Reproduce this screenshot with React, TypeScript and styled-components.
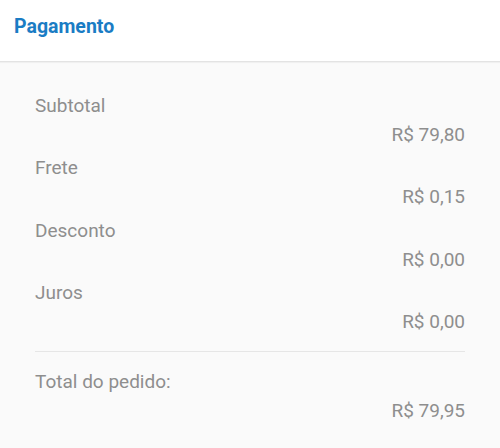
import React from "react";
import styled, { createGlobalStyle } from "styled-components";

const Global = createGlobalStyle`
  html, body { margin: 0; padding: 0; background: #fafafa; }
  body { font-family: Roboto, "Liberation Sans", sans-serif; }
`;

const Page = styled.div`
  width: 500px;
  min-height: 448px;
  background: #fafafa;
`;

const Header = styled.header`
  height: 62px;
  background: #ffffff;
  border-bottom: 1px solid #e3e3e3;
  box-shadow: 0 1px 1px rgba(0, 0, 0, 0.04);
  display: flex;
  align-items: flex-start;
  padding: 15px 14px 0;
  box-sizing: border-box;
`;

const Title = styled.h1`
  margin: 0;
  font-size: 19.5px;
  line-height: normal;
  font-weight: 700;
  color: #1a7cc4;
`;

const Body = styled.section`
  padding: 29px 35px 0;
  display: flex;
  flex-direction: column;
`;

const Item = styled.div`
  display: flex;
  flex-direction: column;
  margin-bottom: 4.33px;
`;

const Label = styled.div`
  font-size: 19px;
  line-height: 29px;
  color: #8e8e8e;
`;

const Value = styled.div`
  font-size: 19px;
  line-height: 29px;
  color: #8e8e8e;
  text-align: right;
`;

const Divider = styled.hr`
  border: none;
  height: 1px;
  background: #e6e6e6;
  margin: 11px 0 15px;
`;

const rows = [
  ["Subtotal", "R$ 79,80"],
  ["Frete", "R$ 0,15"],
  ["Desconto", "R$ 0,00"],
  ["Juros", "R$ 0,00"],
];

export default function App() {
  return (
    <Page>
      <Global />
      <Header>
        <Title>Pagamento</Title>
      </Header>
      <Body>
        {rows.map(([l, v]) => (
          <Item key={l}>
            <Label>{l}</Label>
            <Value>{v}</Value>
          </Item>
        ))}
        <Divider />
        <Item>
          <Label>Total do pedido:</Label>
          <Value>R$ 79,95</Value>
        </Item>
      </Body>
    </Page>
  );
}
